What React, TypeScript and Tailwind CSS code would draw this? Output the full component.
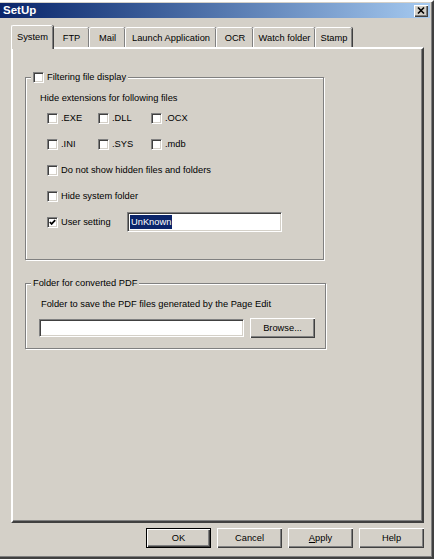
import React from 'react';

const font = "font-['Liberation_Sans',Arial,sans-serif]";

function Box({ checked = false }: { checked?: boolean }) {
  return (
    <span className="w-[11px] h-[11px] shrink-0 bg-white border border-t-[#808080] border-l-[#808080] border-b-white border-r-white shadow-[inset_1px_1px_0_#404040,inset_-1px_-1px_0_#d4d0c8] flex items-center justify-center">
      {checked && (
        <svg width="7" height="7" viewBox="0 0 7 7">
          <polyline points="0.8,3 2.6,4.9 6.2,1.2" fill="none" stroke="#000" strokeWidth="1.7" />
        </svg>
      )}
    </span>
  );
}

function Check({ label, checked = false, className = '' }: { label: string; checked?: boolean; className?: string }) {
  return (
    <div className={`flex items-center gap-[3px] h-[12px] ${className}`}>
      <Box checked={checked} />
      <span>{label}</span>
    </div>
  );
}

function Button({ children, isDefault = false, className = '' }: { children: React.ReactNode; isDefault?: boolean; className?: string }) {
  const edge = isDefault
    ? 'border border-black shadow-[inset_1px_1px_0_#fff,inset_-1px_-1px_0_#404040,inset_-2px_-2px_0_#808080]'
    : 'shadow-[inset_1px_1px_0_#fff,inset_-1px_-1px_0_#404040,inset_-2px_-2px_0_#808080]';
  return (
    <div className={`h-[20px] w-[65px] bg-[#d4d0c8] flex items-center justify-center ${edge} ${className}`}>
      {children}
    </div>
  );
}

const tabs = [
  { name: 'System', w: 'w-[42px]' },
  { name: 'FTP', w: 'w-[36px]' },
  { name: 'Mail', w: 'w-[36px]' },
  { name: 'Launch Application', w: 'w-[91px]' },
  { name: 'OCR', w: 'w-[37px]' },
  { name: 'Watch folder', w: 'w-[62px]' },
  { name: 'Stamp', w: 'w-[37px]' },
];

export default function App() {
  return (
    <div className={`w-[434px] h-[559px] bg-[#d4d0c8] text-black text-[9.3px] leading-[12px] ${font} border-t-[2px] border-t-white border-r-[2px] border-r-[#404040] border-b-[2px] border-b-[#404040] shadow-[inset_-1px_-1px_0_#808080] pt-[1px] pr-[2px] flex flex-col`}>
      {/* title bar */}
      <div className="h-[15px] bg-linear-to-r from-[#0a246a] to-[#a6caf0] flex items-center justify-between pl-[3px] pr-[2px]">
        <span className="text-white font-bold text-[11.5px] leading-[15px]">SetUp</span>
        <div className="w-[14px] h-[12px] bg-[#d4d0c8] shadow-[inset_1px_1px_0_#fff,inset_-1px_-1px_0_#404040,inset_-2px_-2px_0_#808080] flex items-center justify-center">
          <svg width="8" height="7" viewBox="0 0 8 7">
            <path d="M1 0.5 L7 6.5 M7 0.5 L1 6.5" stroke="#000" strokeWidth="1.6" />
          </svg>
        </div>
      </div>

      <div className="pl-[11px] pr-[6px] flex flex-col">
        {/* tabs */}
        <div className="flex items-end h-[22px] mt-[7px]">
          {tabs.map((t, i) =>
            i === 0 ? (
              <div
                key={t.name}
                className={`${t.w} h-[24px] -mb-[2px] relative z-10 bg-[#d4d0c8] border-t border-l border-white rounded-t-[2px] shadow-[inset_-1px_0_0_#808080,1px_0_0_#404040] flex justify-center pt-[5px]`}
              >
                {t.name}
              </div>
            ) : (
              <div
                key={t.name}
                className={`${t.w} h-[20px] bg-[#d4d0c8] border-t border-l border-white rounded-t-[2px] shadow-[inset_-1px_0_0_#808080,1px_0_0_#404040] flex justify-center pt-[4px]`}
              >
                {t.name}
              </div>
            )
          )}
        </div>

        {/* panel */}
        <div className="h-[476px] border-t-[2px] border-l-[2px] border-t-white border-l-white border-r-[2px] border-r-[#404040] border-b-[2px] border-b-[#404040] shadow-[inset_-1px_-1px_0_#808080] pl-[12px]">
          <fieldset className="mt-[22px] w-[299px] border border-[#808080] shadow-[inset_1px_1px_0_#fff,1px_1px_0_#fff]">
            <legend className="ml-[5px] px-[2px] bg-[#d4d0c8]">
              <Check label="Filtering file display" />
            </legend>
            <div className="pl-[14px] pt-[9px] pb-[27px] flex flex-col">
              <div className="h-[12px]">Hide extensions for following files</div>
              <div className="ml-[7px] mt-[8px] flex">
                <Check label=".EXE" className="w-[51px]" />
                <Check label=".DLL" className="w-[53px]" />
                <Check label=".OCX" />
              </div>
              <div className="ml-[7px] mt-[14px] flex">
                <Check label=".INI" className="w-[51px]" />
                <Check label=".SYS" className="w-[53px]" />
                <Check label=".mdb" />
              </div>
              <Check label="Do not show hidden files and folders" className="ml-[7px] mt-[14px]" />
              <Check label="Hide system folder" className="ml-[7px] mt-[14px]" />
              <div className="ml-[7px] mt-[10px] h-[20px] flex items-center gap-[3px]">
                <Box checked />
                <span className="w-[63px]">User setting</span>
                <div className="w-[155px] h-[20px] bg-white border-[1px] border-t-[#808080] border-l-[#808080] border-b-white border-r-white shadow-[inset_1px_1px_0_#404040,inset_-1px_-1px_0_#d4d0c8] flex items-center pl-[2px]">
                  <span className="bg-[#0a246a] text-white leading-[14px] px-[1px]">UnKnown</span>
                </div>
              </div>
            </div>
          </fieldset>

          <fieldset className="mt-[17px] w-[301px] border border-[#808080] shadow-[inset_1px_1px_0_#fff,1px_1px_0_#fff]">
            <legend className="ml-[5px] px-[2px] bg-[#d4d0c8] h-[12px]">Folder for converted PDF</legend>
            <div className="pl-[13px] pt-[9px] pb-[10px] flex flex-col">
              <div className="h-[12px] ml-[2px]">Folder to save the PDF files generated by the Page Edit</div>
              <div className="mt-[8px] flex items-center gap-[6px]">
                <div className="w-[205px] h-[18px] bg-white border-[1px] border-t-[#808080] border-l-[#808080] border-b-white border-r-white shadow-[inset_1px_1px_0_#404040,inset_-1px_-1px_0_#d4d0c8]" />
                <Button>Browse...</Button>
              </div>
            </div>
          </fieldset>
        </div>

        {/* dialog buttons */}
        <div className="mt-[5px] flex justify-end gap-[6px]">
          <Button isDefault>OK</Button>
          <Button>Cancel</Button>
          <Button>
            <span>
              <span className="underline">A</span>pply
            </span>
          </Button>
          <Button>Help</Button>
        </div>
      </div>
    </div>
  );
}
